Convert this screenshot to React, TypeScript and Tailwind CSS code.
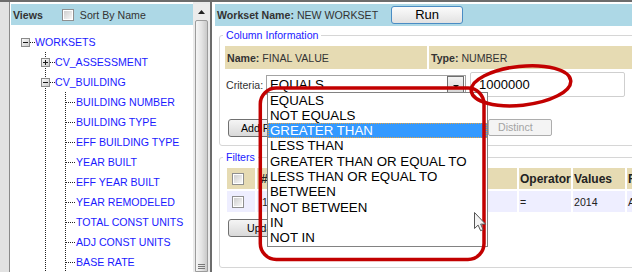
import React from "react";

const OPTIONS = [
  "EQUALS",
  "NOT EQUALS",
  "GREATER THAN",
  "LESS THAN",
  "GREATER THAN OR EQUAL TO",
  "LESS THAN OR EQUAL TO",
  "BETWEEN",
  "NOT BETWEEN",
  "IN",
  "NOT IN",
];

const COLUMNS = [
  "BUILDING NUMBER",
  "BUILDING TYPE",
  "EFF BUILDING TYPE",
  "YEAR BUILT",
  "EFF YEAR BUILT",
  "YEAR REMODELED",
  "TOTAL CONST UNITS",
  "ADJ CONST UNITS",
  "BASE RATE",
];

function Checkbox() {
  return (
    <span className="inline-flex w-[12px] h-[12px] border border-[#8f8f8f] bg-white p-[1px] shrink-0">
      <span className="block w-full h-full bg-gradient-to-br from-[#cfcfcf] to-[#f7f7f7]" />
    </span>
  );
}

type CellKind = "blank" | "I" | "T" | "plus" | "minus" | "rootMinus";

function TreeCell({ kind }: { kind: CellKind }) {
  const dots = { stroke: "#222", strokeWidth: 1, strokeDasharray: "1 1" } as const;
  return (
    <svg width="20" height="20" className="block shrink-0" shapeRendering="crispEdges">
      <defs>
        <linearGradient id="bx" x1="0" y1="0" x2="1" y2="1">
          <stop offset="0" stopColor="#ffffff" />
          <stop offset="1" stopColor="#c8c8c8" />
        </linearGradient>
      </defs>
      {(kind === "I" || kind === "T" || kind === "plus" || kind === "minus") && (
        <line x1="10.5" y1="0" x2="10.5" y2="20" {...dots} />
      )}
      {kind === "T" && <line x1="11" y1="10.5" x2="20" y2="10.5" {...dots} />}
      {(kind === "plus" || kind === "minus" || kind === "rootMinus") && (
        <g>
          <line x1="15" y1="10.5" x2="20" y2="10.5" {...dots} />
          <rect x="6.5" y="6.5" width="8" height="8" fill="url(#bx)" stroke="#8a8a8a" />
          <line x1="8" y1="10.5" x2="13" y2="10.5" stroke="#1a1a1a" />
          {kind === "plus" && <line x1="10.5" y1="8" x2="10.5" y2="13" stroke="#1a1a1a" />}
        </g>
      )}
    </svg>
  );
}

function TreeRow({ cells, text, indent }: { cells: CellKind[]; text: string; indent?: boolean }) {
  return (
    <div className="flex items-center h-[20px] whitespace-nowrap">
      {cells.map((c, i) => (
        <TreeCell key={i} kind={c} />
      ))}
      <span className={indent ? "pl-[1px] leading-[20px]" : "leading-[20px]"}>{text}</span>
    </div>
  );
}

export default function App() {
  return (
    <div className="relative w-[632px] h-[272px] overflow-hidden bg-white font-['Liberation_Sans',Arial,Helvetica,sans-serif] text-[10.6px] leading-[12px] text-[#2a2a2a]">
      <div className="h-[2px] bg-[#6c6c6c]" />
      <div className="flex h-[270px]">
        <div className="w-[9px] shrink-0 bg-[#e2e2e2]" />
        <div className="w-[1px] shrink-0 bg-[#8a8a8a]" />
        <div className="w-[1px] shrink-0 bg-white" />

        {/* Left panel */}
        <div className="w-[182px] shrink-0 bg-white pt-[2px]">
          <div className="h-[21px] bg-[#add8e6] flex items-center pl-[2px]">
            <span className="font-bold text-[#333]">Views</span>
            <span className="ml-[19px] flex">
              <Checkbox />
            </span>
            <span className="ml-[6px] text-[#333]">Sort By Name</span>
          </div>
          <div className="pt-[7px] pl-[4px] text-[#1a1aff]">
            <TreeRow cells={["rootMinus"]} text="WORKSETS" />
            <TreeRow cells={["blank", "plus"]} text="CV_ASSESSMENT" />
            <TreeRow cells={["blank", "minus"]} text="CV_BUILDING" />
            {COLUMNS.map((c) => (
              <TreeRow key={c} cells={["blank", "I", "T"]} text={c} indent />
            ))}
          </div>
        </div>

        {/* Scrollbar */}
        <div className="w-[17px] shrink-0 bg-[#ebebeb] flex flex-col pt-[2px]">
          <div className="h-[16px] flex items-center justify-center">
            <svg width="7" height="4" className="block">
              <polygon points="3.5,0 7,4 0,4" fill="#222" />
            </svg>
          </div>
          <div className="flex-1 ml-[2px] w-[13px] rounded-t-[2px] border border-[#9c9c9c] bg-gradient-to-r from-[#f6f6f6] via-[#e4e4e4] to-[#c9c9c9] flex flex-col justify-end items-center pb-[2px] gap-[1px]">
            <span className="block w-[7px] h-[1px] bg-[#777]" />
            <span className="block w-[7px] h-[1px] bg-[#777]" />
            <span className="block w-[7px] h-[1px] bg-[#777]" />
          </div>
        </div>

        <div className="w-[2px] shrink-0 bg-[#6c6c6c]" />

        {/* Right panel */}
        <div className="w-[420px] shrink-0 bg-white pt-[2px]">
          <div className="ml-[3px] h-[22px] bg-[#add8e6] flex items-center pl-[2px]">
            <span className="text-[#333] whitespace-nowrap">
              <b>Workset Name:</b> NEW WORKSET
            </span>
            <button className="ml-[13px] w-[72px] h-[18px] rounded-[3px] border border-[#4a8cc4] bg-gradient-to-b from-[#fbfbfb] to-[#e2e2e2] text-[13px] leading-[16px] text-black">
              Run
            </button>
          </div>

          {/* Column Information */}
          <fieldset className="mt-[3px] ml-[7px] w-[430px] border border-[#d6d6d6] rounded-[3px] px-[5px] pb-[8px]">
            <legend className="-ml-[2px] px-[3px] text-[#1a1aff] leading-[12px]">Column Information</legend>
            <div className="mt-[5px] flex gap-[2px] h-[23px]">
              <div className="w-[202px] bg-[#e6dbb3] flex items-center pl-[2px] text-[#333] whitespace-nowrap">
                <b>Name:</b>&nbsp;FINAL VALUE
              </div>
              <div className="flex-1 bg-[#e6dbb3] flex items-center pl-[2px] text-[#333] whitespace-nowrap">
                <b>Type:</b>&nbsp;NUMBER
              </div>
            </div>
            <div className="mt-[3px] h-[25px] flex items-center">
              <span className="w-[41px] pl-[1px] text-[#333] shrink-0">Criteria:</span>
              <div className="relative w-[200px] h-[20px] border border-[#a3a3a3] bg-white flex items-center shrink-0">
                <span className="flex-1 pl-[3px] text-[13.3px] leading-[16px] text-black">EQUALS</span>
                <div className="mr-[1px] w-[17px] h-[18px] border border-[#6f6f6f] bg-gradient-to-b from-[#f3f3f3] to-[#d5d5d5] flex items-center justify-center pt-[4px]">
                  <svg width="6" height="3" className="block">
                    <polygon points="0,0 6,0 3,3" fill="#111" />
                  </svg>
                </div>
                <div className="absolute left-0 top-[16px] w-[221px] h-[155px] border border-[#828282] bg-white z-10">
                  {OPTIONS.map((o, i) => (
                    <div
                      key={o}
                      className={
                        i === 2
                          ? "h-[15.3px] leading-[15.3px] pl-[2px] text-[13.3px] whitespace-nowrap bg-[#3399ff] text-white outline-1 outline-dotted outline-[#e9a23b] -outline-offset-1"
                          : "h-[15.3px] leading-[15.3px] pl-[2px] text-[13.3px] whitespace-nowrap text-black"
                      }
                    >
                      {o}
                    </div>
                  ))}
                </div>
              </div>
              <div className="ml-[4px] w-[155px] h-[25px] border border-[#cfcfcf] rounded-[2px] flex items-center pl-[8px] text-[13px] text-black shrink-0">
                1000000
              </div>
            </div>
            <div className="mt-[22px] flex items-start h-[18px]">
              <button className="ml-[3px] w-[72px] h-[18px] text-left pl-[12px] border border-[#707070] rounded-[3px] bg-gradient-to-b from-[#f5f5f5] to-[#d9d9d9] leading-[16px] text-black whitespace-nowrap shrink-0">
                Add Filter
              </button>
              <button
                disabled
                className="ml-[188px] w-[64px] h-[17px] text-left pl-[9px] border border-[#adadad] rounded-[2px] bg-[#f4f4f4] leading-[15px] text-[#a3a3a3] shrink-0"
              >
                Distinct
              </button>
            </div>
          </fieldset>

          {/* Filters */}
          <fieldset className="mt-[5px] ml-[7px] w-[430px] border border-[#d6d6d6] rounded-[3px] px-[5px] pb-[30px]">
            <legend className="-ml-[2px] px-[3px] text-[#1a1aff] leading-[12px]">Filters</legend>
            <div className="mt-[5px] ml-[2px] flex flex-col gap-[2px]">
              <div className="flex gap-[2px] h-[21px] text-[12px] font-bold text-[#222]">
                <div className="w-[28px] bg-[#e6dbb3] flex items-center pl-[5px] shrink-0">
                  <Checkbox />
                </div>
                <div className="w-[30px] bg-[#e6dbb3] flex items-center pl-[4px] shrink-0">#</div>
                <div className="w-[228px] bg-[#e6dbb3] shrink-0" />
                <div className="w-[52px] bg-[#e6dbb3] flex items-center pl-[1px] shrink-0">Operator</div>
                <div className="w-[52px] bg-[#e6dbb3] flex items-center pl-[1px] shrink-0">Values</div>
                <div className="w-[60px] bg-[#e6dbb3] flex items-center pl-[1px] shrink-0">Field</div>
              </div>
              <div className="flex gap-[2px] h-[21px] text-[10.6px] text-[#222]">
                <div className="w-[28px] bg-[#eeeeff] flex items-center pl-[5px] shrink-0">
                  <Checkbox />
                </div>
                <div className="w-[30px] bg-[#eeeeff] flex items-center pl-[5px] shrink-0">1</div>
                <div className="w-[228px] bg-[#eeeeff] shrink-0" />
                <div className="w-[52px] bg-[#eeeeff] flex items-center pl-[1px] shrink-0">=</div>
                <div className="w-[52px] bg-[#eeeeff] flex items-center pl-[1px] shrink-0">2014</div>
                <div className="w-[60px] bg-[#eeeeff] flex items-center pl-[1px] shrink-0">AND</div>
              </div>
            </div>
            <button className="mt-[7px] ml-[3px] w-[96px] h-[18px] text-left pl-[18px] border border-[#707070] rounded-[3px] bg-gradient-to-b from-[#f5f5f5] to-[#d9d9d9] leading-[16px] text-black whitespace-nowrap block">
              Update
            </button>
          </fieldset>
        </div>
      </div>

      {/* Annotations */}
      <svg className="absolute inset-0 pointer-events-none z-20" width="632" height="272">
        <rect x="260.3" y="88" width="223.7" height="171.5" rx="16" fill="none" stroke="#c20000" strokeWidth="3.5" />
        <ellipse
          cx="521"
          cy="85.8"
          rx="50"
          ry="19.5"
          transform="rotate(-6 521 85.8)"
          fill="none"
          stroke="#c20000"
          strokeWidth="3.5"
        />
        <g transform="translate(474.5 212.5)">
          <path
            d="M0 0 L0 16 L3.6 12.6 L6.1 18.2 L8.6 17.1 L6.2 11.6 L11 11.6 Z"
            fill="#f4f4f4"
            stroke="#555"
            strokeWidth="1"
            strokeLinejoin="round"
          />
        </g>
      </svg>
    </div>
  );
}
